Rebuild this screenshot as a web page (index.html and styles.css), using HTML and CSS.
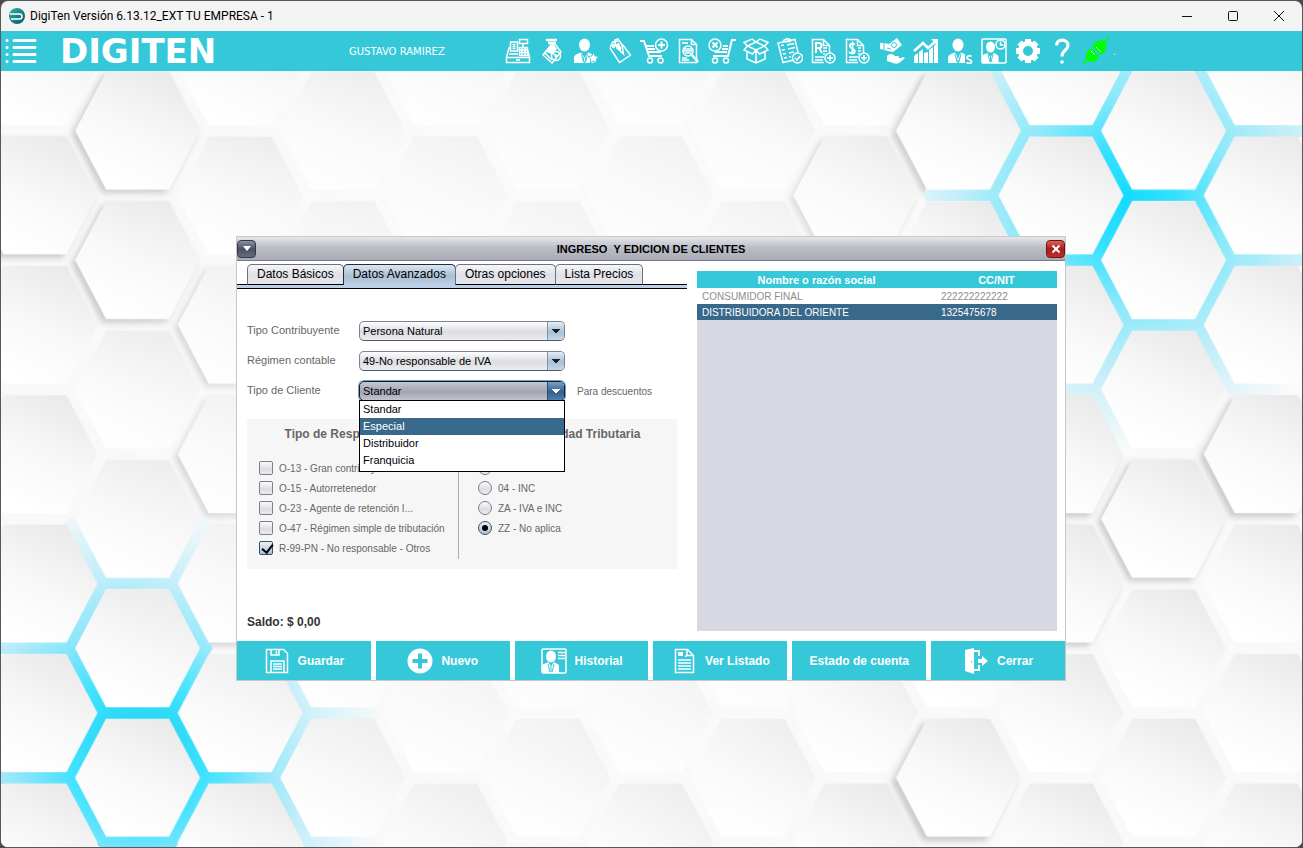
FILE: index.html
```html
<!DOCTYPE html>
<html lang="es">
<head>
    <meta charset="UTF-8">
    <meta name="viewport" content="width=device-width, initial-scale=1.0">
    <title>DigiTen Versión 6.13.12_EXT TU EMPRESA - 1</title>
    <link rel="stylesheet" href="styles.css">
</head>
<body>
    <div class="window">
        <header class="title-bar">
            <svg class="app-icon" viewBox="0 0 16 16" aria-hidden="true">
                <defs>
                    <linearGradient id="appFill" x1="0" y1="0" x2="1" y2="1">
                        <stop offset="0" stop-color="#2fb5ad"/>
                        <stop offset="1" stop-color="#07545f"/>
                    </linearGradient>
                </defs>
                <circle cx="8" cy="8" r="8" fill="url(#appFill)"/>
                <path d="M1 6h9.500a2.500 2.500 0 0 1 0 5H2" fill="none" stroke="#fff" stroke-width="1.500"/>
            </svg>
            <span class="window-title">DigiTen Versión 6.13.12_EXT TU EMPRESA - 1</span>
            <div class="window-controls">
                <button type="button" aria-label="Minimizar"><svg viewBox="0 0 12 12"><path d="M1 6.500h10"/></svg></button>
                <button type="button" aria-label="Maximizar"><svg viewBox="0 0 12 12"><rect x="1.500" y="1.500" width="9" height="9" rx="1"/></svg></button>
                <button type="button" aria-label="Cerrar ventana"><svg viewBox="0 0 12 12"><path d="M1 1l10 10M11 1L1 11"/></svg></button>
            </div>
        </header>

        <nav class="toolbar">
            <button type="button" class="menu-button" aria-label="Menú">
                <svg viewBox="0 0 33 26"><path d="M9 2.500h21M9 9.500h21M9 16.500h21M9 23.500h21M2 2.500h.1M2 9.500h.1M2 16.500h.1M2 23.500h.1"/></svg>
            </button>
            <span class="brand">DIGITEN</span>
            <span class="user-name">GUSTAVO RAMIREZ</span>
            <div class="tools">
                <!-- Caja -->
                <button type="button" aria-label="Caja"><svg viewBox="0 0 26 26"><path d="M1.500 19.500h23v5h-23zM1.500 19l2.500-9h2M24.500 19l-2.500-9"/><path d="M5.500 4h7v9h-7zM7.500 6.500h3M7.500 8.500h3M7.500 10.500h3M14.500 1.500h8v4h-8zM18 6v3M14.500 9.500h8v8h-8zM15 12h7M15 14.500h7M17 10v7M20 10v7M4 16h9"/><path class="solid" d="M11 21h4v2h-4z"/></svg></button>
                <!-- Datáfono -->
                <button type="button" aria-label="Pagos"><svg viewBox="0 0 26 26"><path d="M7 2h11M9 5h8" stroke-width="2.500"/><path d="M12 7l4-1 6 8-9 11-9-8z"/><path class="solid" d="M12 8l3-1 3 4-5 5-6-2z"/><path d="M6 15l7 7M10 12l6 5"/><circle cx="17" cy="18" r="4.500"/><path d="M17 16v4M15.500 18h3"/></svg></button>
                <!-- Clientes -->
                <button type="button" aria-label="Clientes"><svg viewBox="0 0 26 26"><ellipse class="solid" cx="11.500" cy="7" rx="5.500" ry="6.500"/><path class="solid" d="M1 25v-5c0-3 3-4 7-5.500l3.500 5 3.500-5c3 1 5 2 6.500 3L20 21l1 4z"/><path class="cut" d="M11.500 18l-1.500 3 1.500 4 1.500-4zM8.500 16l2 8M14.500 16l-2 8"/><path class="badge" d="M20.500 14.500l1.700 3.500 3.700.5-2.700 2.700.7 3.800-3.400-1.800-3.400 1.800.7-3.800-2.700-2.700 3.700-.5z"/></svg></button>
                <!-- Etiqueta -->
                <button type="button" aria-label="Etiquetas"><svg viewBox="0 0 26 26"><path d="M3 9.500L6 4l5-1M15 6l8.500 11-11 7.500L3 10"/><circle cx="6.500" cy="8" r="1.200"/><path d="M8 6V2l3-1 4 6 1.500 9-6.500-6L8 5M11 5l3 6M9.500 6l4 6"/></svg></button>
                <!-- Carro de ventas -->
                <button type="button" aria-label="Ventas"><svg viewBox="0 0 30 26"><path d="M1 3h4l5 15h13M7 8h8M8 11h8M9 14h13"  stroke-width="2"/><circle cx="11" cy="22.500" r="2.500"/><circle cx="21.500" cy="22.500" r="2.500"/><circle cx="22.500" cy="7" r="6"/><path d="M22.500 3.500v7M19 7h7" stroke-width="2"/></svg></button>
                <!-- Buscar factura -->
                <button type="button" aria-label="Buscar factura"><svg viewBox="0 0 26 26"><path d="M4.500 1.500h12l5 5v18h-17zM16.500 1.500v5h5M7 5h6M7 20h5M7 22h7"/><circle cx="13" cy="13" r="5"/><path d="M9 11h8M9 13h8M10 15h6"/><path d="M17 17l6 7" stroke-width="2.500"/></svg></button>
                <!-- Anular venta -->
                <button type="button" aria-label="Anular venta"><svg viewBox="0 0 30 26"><path d="M29 2h-4l-4 16H6M21 8h-5M21 11h-6M20 14H8" stroke-width="2"/><circle cx="8" cy="22.500" r="2.500"/><circle cx="19" cy="22.500" r="2.500"/><circle cx="8" cy="7" r="6"/><path d="M5.500 4.500l5 5M10.500 4.500l-5 5" stroke-width="2"/></svg></button>
                <!-- Inventario -->
                <button type="button" aria-label="Inventario"><svg viewBox="0 0 26 26"><path d="M4.500 8L13 4l8.500 4L13 12zM4.500 8L1 12l8.500 4L13 12l3.500 4L25 12l-3.500-4M4.500 8L1 4.500 9 1l4 3 4-3 8 3.500L21.500 8M4 14v7l9 4 9-4v-7M13 13v12"/></svg></button>
                <!-- Pedidos -->
                <button type="button" aria-label="Pedidos"><svg viewBox="0 0 26 26"><path d="M17 22l-11 2.500L1 5l17-3.500 3 13M6 4l1-2 2-1 2-.2 2 .8v2zM4 7.500L7 7M10 7l7-1.500M5 12l3-.500M11 11l7-1.500M6 16l3-.500M12 15l5-1M7 20l3-.500M12 19l2-.500" /><circle cx="20.500" cy="20" r="5"/><path d="M18 20l2 2 3-4"/></svg></button>
                <!-- Recibos -->
                <button type="button" aria-label="Recibos"><svg viewBox="0 0 26 26"><path d="M13 24.500H1.500v-23h11l6 6v7M12.500 1.500v6h6M4 19h9M4 22h8M12 10h4M12 13h4M12 16h2"/><path d="M5 15V5h3a2.500 2.500 0 0 1 0 5H5M8 10l3 5" stroke-width="2"/><circle cx="19" cy="20" r="5"/><path d="M19 17v6M16 20h6"/></svg></button>
                <!-- Comprobantes de egreso -->
                <button type="button" aria-label="Egresos"><svg viewBox="0 0 26 26"><path d="M13 24.500H1.500v-23h11l6 6v7M12.500 1.500v6h6M4 19h9M4 22h8M13 10h3M13 13h3M13 16h2"/><path d="M10 6.500C7 4.500 4 6 5 8.500S10.500 11 10 13.500 6 16 4 14M7.500 3.500v13" stroke-width="1.800"/><circle cx="19" cy="20" r="5"/><path d="M19 17v6M16 20h6"/></svg></button>
                <!-- Préstamos -->
                <button type="button" aria-label="Préstamos"><svg viewBox="0 0 26 26"><path class="solid" d="M1 5h4l5 1 8-6 5 7-9 7-5-1-8-2z"/><circle class="cut" cx="15" cy="7" r="2.500"/><path class="cut" d="M5 4v8M8 10l4 1"/><path class="solid" d="M8 18c3-3 6-2 8 0h3c2 0 1 2-1 2h4l2-1c2 0 2 1 1 2l-5 4c-4 2-8-1-12-2z"/></svg></button>
                <!-- Informes -->
                <button type="button" aria-label="Informes"><svg viewBox="0 0 26 26"><path class="solid" d="M1 18l4-3v10H1zM6 14l4-3v14H6zM11 15l4-1v11h-4zM16 12l4-3v16h-4zM21 8l4-4v21h-4z"/><path d="M1 13l9-8 5 5 8-7" stroke-width="2.500"/><path class="solid" d="M18 1h7v7z"/></svg></button>
                <!-- Vendedores -->
                <button type="button" aria-label="Vendedores"><svg viewBox="0 0 26 26"><ellipse class="solid" cx="11" cy="7" rx="5.500" ry="6.500"/><path class="solid" d="M1 25v-5c0-3 3-4 7-5.500l3 5 3-5c2 1 3 1 4 2v8.500z"/><path class="cut" d="M11 18l-1.500 3 1.500 4 1.500-4zM8 16l2 8M14 16l-2 8"/><path d="M24.500 18.500c-3-2-6 1-3.500 2.500s4 1 3.500 3-3 1.500-5 .5" stroke-width="1.800"/></svg></button>
                <!-- Turnos -->
                <button type="button" aria-label="Turnos"><svg viewBox="0 0 26 26"><rect x="1" y="1" width="24" height="24" rx="1"/><ellipse class="solid" cx="9.500" cy="9" rx="4.500" ry="5.500"/><path class="solid" d="M1 25v-6c0-2 3-3 5.500-4l3 4 3-4c3 1 5 2 5 4v6z"/><path class="cut" d="M9.500 17v7M7 16l2 8M12 16l-2 8"/><circle cx="19.500" cy="6.500" r="4.500"/><path d="M19.500 3.500v3.500h3"/></svg></button>
                <!-- Configuración -->
                <button type="button" aria-label="Configuración"><svg viewBox="0 0 26 26"><path d="M13 1v5M13 20v5M1 13h5M20 13h5M4.500 4.500L8 8M18 18l3.500 3.500M21.500 4.500L18 8M8 18l-3.500 3.500" stroke-width="6" stroke-linecap="butt"/><circle cx="13" cy="13" r="7.500" stroke-width="5"/></svg></button>
                <!-- Ayuda -->
                <button type="button" aria-label="Ayuda"><svg viewBox="0 0 26 26"><path d="M7.500 7.500C7.500 0 19 .500 19 7.500c0 5-6 4-6 11" stroke-width="3.200"/><circle class="solid" cx="13" cy="24" r="1.800"/></svg></button>
                <!-- Conexión -->
                <button type="button" class="online" aria-label="Conectado"><svg viewBox="0 0 26 26"><path d="M0 26l5-5M21 5l5-5" stroke-width="2"/><path class="solid" d="M5 12l3-2 8 8-2 4c-7 6-15-2-9-10zM9 8l4-4c7-5 13 2 9 9l-4 4z"/><path d="M8 13l4 4M13 9l5 5" class="pins"/></svg></button>
            </div>
            <span class="status-dot">.</span>
        </nav>

        <main class="desktop">
            <svg class="wallpaper" viewBox="0 71 1303 776" preserveAspectRatio="xMidYMid slice" aria-hidden="true">
                <defs>
                    <linearGradient id="cell" x1=".75" y1="0" x2=".3" y2=".9">
                        <stop offset="0" stop-color="#e9e9e9"/>
                        <stop offset=".55" stop-color="#f8f8f8"/>
                        <stop offset="1" stop-color="#ffffff"/>
                    </linearGradient>
                    <polygon id="hex" points="-62.500,0 -31.500,-59 31.500,-59 62.500,0 31.500,59 -31.500,59"/>
                    <pattern id="comb" x="35" y="66" width="205.200" height="129.400" patternUnits="userSpaceOnUse">
                        <g fill="url(#cell)">
                            <use href="#hex" x="0" y="0"/>
                            <use href="#hex" x="205.200" y="0"/>
                            <use href="#hex" x="0" y="129.400"/>
                            <use href="#hex" x="205.200" y="129.400"/>
                            <use href="#hex" x="102.600" y="64.700"/>
                        </g>
                    </pattern>
                    <radialGradient id="glowRight" gradientUnits="userSpaceOnUse" cx="1125" cy="200" r="250">
                        <stop offset="0" stop-color="#12dbff"/>
                        <stop offset=".2" stop-color="#35e0ff"/>
                        <stop offset=".42" stop-color="#8be9fa"/>
                        <stop offset=".7" stop-color="#c4eef9"/>
                        <stop offset="1" stop-color="#fafafa"/>
                    </radialGradient>
                    <radialGradient id="glowLeft" gradientUnits="userSpaceOnUse" cx="140" cy="745" r="245">
                        <stop offset="0" stop-color="#18d2ef"/>
                        <stop offset=".3" stop-color="#42e2ff"/>
                        <stop offset=".5" stop-color="#8be6fa"/>
                        <stop offset=".7" stop-color="#c0edf9"/>
                        <stop offset="1" stop-color="#f4f8fa"/>
                    </radialGradient>
                    <radialGradient id="haze" gradientUnits="userSpaceOnUse" cx="560" cy="420" r="480">
                        <stop offset="0" stop-color="#fbfbfb" stop-opacity=".7"/>
                        <stop offset=".6" stop-color="#fbfbfb" stop-opacity=".5"/>
                        <stop offset="1" stop-color="#fbfbfb" stop-opacity="0"/>
                    </radialGradient>
                    <filter id="soft" x="-10%" y="-10%" width="120%" height="120%">
                        <feGaussianBlur stdDeviation="3"/>
                    </filter>
                </defs>
                <rect y="71" width="1303" height="777" fill="#f9f9f9"/>
                <!-- raised cells -->
                <g fill="#c9c9c9" filter="url(#soft)">
                    <use href="#hex" x="134" y="134"/>
                    <use href="#hex" x="134" y="264"/>
                    <use href="#hex" x="31" y="199"/>
                    <use href="#hex" x="237" y="328"/>
                    <use href="#hex" x="237" y="458"/>
                    <use href="#hex" x="237" y="587"/>
                    <use href="#hex" x="852" y="199"/>
                    <use href="#hex" x="954" y="134"/>
                    <use href="#hex" x="1160" y="522"/>
                    <use href="#hex" x="1262" y="458"/>
                    <use href="#hex" x="1057" y="458"/>
                    <use href="#hex" x="1057" y="587"/>
                    <use href="#hex" x="954" y="782"/>
                </g>
                <path class="glow" stroke="url(#glowRight)" d="M1129 195L1095 131L1129 66M1095 131H1027L993 195L1027 260H1095L1129 195H1198L1232 131L1198 66M1232 131H1303M1198 195L1232 260H1303M1232 260L1198 325H1129L1095 260M1198 325L1232 389H1303M1129 325L1095 389L1129 454M1095 389H1027M1027 131L993 66M993 195H925"/>
                <path class="glow" stroke="url(#glowLeft)" d="M103 713H172L206 778L172 842H103L69 778L103 713L69 648L103 583H172L206 648L172 713M69 648H0M69 778H0M206 778H274L308 713H377M274 778L308 842H377M274 648L308 713M103 583L69 519M172 583L206 519"/>
                <rect y="71" width="1303" height="777" fill="url(#comb)"/>
                <rect y="71" width="1303" height="777" fill="url(#haze)"/>
            </svg>

            <section class="dialog" role="dialog" aria-labelledby="dialogTitle">
                <div class="dialog-bar">
                    <button type="button" class="dialog-menu" aria-label="Opciones de ventana"><svg viewBox="0 0 8 5"><path d="M0 0h8L4 5z"/></svg></button>
                    <h1 id="dialogTitle">INGRESO &nbsp;Y EDICION DE CLIENTES</h1>
                    <button type="button" class="dialog-close" aria-label="Cerrar"><svg viewBox="0 0 10 10"><path d="M1.500 1.500l7 7M8.500 1.500l-7 7"/></svg></button>
                </div>

                <div class="dialog-body">
                    <div class="editor">
                        <div class="tabs" role="tablist">
                            <button type="button" role="tab">Datos Básicos</button>
                            <button type="button" role="tab" class="active" aria-selected="true">Datos Avanzados</button>
                            <button type="button" role="tab">Otras opciones</button>
                            <button type="button" role="tab">Lista Precios</button>
                        </div>

                        <form class="fields">
                            <div class="field">
                                <label for="contribuyente">Tipo Contribuyente</label>
                                <div class="combo">
                                    <select id="contribuyente"><option>Persona Natural</option></select>
                                </div>
                            </div>
                            <div class="field">
                                <label for="regimen">Régimen contable</label>
                                <div class="combo">
                                    <select id="regimen"><option>49-No responsable de IVA</option></select>
                                </div>
                            </div>
                            <div class="field">
                                <label for="tipoCliente">Tipo de Cliente</label>
                                <div class="combo open">
                                    <select id="tipoCliente">
                                        <option>Standar</option>
                                        <option>Especial</option>
                                        <option>Distribuidor</option>
                                        <option>Franquicia</option>
                                    </select>
                                    <ul class="combo-list" role="listbox" aria-label="Tipo de Cliente">
                                        <li role="option">Standar</li>
                                        <li role="option" class="highlighted" aria-selected="true">Especial</li>
                                        <li role="option">Distribuidor</li>
                                        <li role="option">Franquicia</li>
                                    </ul>
                                </div>
                                <span class="hint">Para descuentos</span>
                            </div>

                            <div class="tax-panel">
                                <fieldset>
                                    <legend>Tipo de Responsabilidad</legend>
                                    <label><input type="checkbox">O-13 - Gran contribuyente</label>
                                    <label><input type="checkbox">O-15 - Autorretenedor</label>
                                    <label><input type="checkbox">O-23 - Agente de retención I...</label>
                                    <label><input type="checkbox">O-47 - Régimen simple de tributación</label>
                                    <label><input type="checkbox" checked>R-99-PN - No responsable - Otros</label>
                                </fieldset>
                                <fieldset>
                                    <legend>Responsabilidad Tributaria</legend>
                                    <label><input type="radio" name="tributo">01 - IVA</label>
                                    <label><input type="radio" name="tributo">04 - INC</label>
                                    <label><input type="radio" name="tributo">ZA - IVA e INC</label>
                                    <label><input type="radio" name="tributo" checked>ZZ - No aplica</label>
                                </fieldset>
                            </div>
                            <p class="balance">Saldo: $ 0,00</p>
                        </form>
                    </div>

                    <div class="client-list">
                        <table>
                            <thead>
                                <tr><th class="name">Nombre o razón social</th><th>CC/NIT</th></tr>
                            </thead>
                            <tbody>
                                <tr><td>CONSUMIDOR FINAL</td><td>222222222222</td></tr>
                                <tr class="selected"><td>DISTRIBUIDORA DEL ORIENTE</td><td>1325475678</td></tr>
                            </tbody>
                        </table>
                    </div>
                </div>

                <div class="actions">
                    <button type="button"><svg viewBox="0 0 26 26"><path d="M2.500 1.500h17l4 4v19h-21zM7 2v5h8V2M12.500 3v3M7 24V13h13v11M9 16h9M9 18.500h9M9 21h9"/></svg>Guardar</button>
                    <button type="button"><svg viewBox="0 0 26 26"><circle class="solid" cx="13" cy="13" r="12.500"/><path class="plus" d="M13 5.500v15M5.500 13h15"/></svg>Nuevo</button>
                    <button type="button"><svg viewBox="0 0 26 26"><rect x="1" y="1" width="24" height="24" rx="1"/><ellipse class="solid" cx="10" cy="8.500" rx="5" ry="6"/><path class="solid" d="M1 25v-7c0-2 3-2 6-4l3 4 3-4c3 2 5 2 5 4v7z"/><path class="cut" d="M10 17v7M7 16l2 8M13 16l-2 8"/><path d="M17 4.500h7M17 7.500h7M17 10.500h7"/></svg>Historial</button>
                    <button type="button"><svg viewBox="0 0 26 26"><path d="M4.500 1.500h12l6 6v17h-18zM16 1.500v6h6M7 12h13M7 15h13M7 18h13M7 21h13M14 8h2"/><path class="solid" d="M7 4h5v4H7z"/></svg>Ver Listado</button>
                    <button type="button">Estado de cuenta</button>
                    <button type="button"><svg viewBox="0 0 26 26"><path class="solid" d="M2 2l9-2v26l-9-3z"/><path d="M11 3h5v5M11 22h5v-5" stroke-width="2"/><path class="solid" d="M15 11h4V8l6 5-6 5v-3h-4z"/><path class="cut" d="M8.500 13v1.500"/></svg>Cerrar</button>
                </div>
            </section>
        </main>
    </div>
</body>
</html>
```

FILE: styles.css
```css
* {
    box-sizing: border-box;
}
body {
    margin: 0;
    background-color: #4a4a4c;
    font-family: "Liberation Sans", Arial, sans-serif;
    font-size: 11px;
    color: #000;
}
button {
    padding: 0;
    border: none;
    background: none;
    font-family: inherit;
    color: inherit;
}
svg {
    display: block;
    fill: none;
}
.window {
    display: flex;
    flex-direction: column;
    height: 100vh;
    border: 1px solid #58585a;
    border-radius: 8px;
    overflow: hidden;
}

/* Title bar */
.title-bar {
    display: flex;
    align-items: center;
    height: 30px;
    padding-left: 8px;
    background-color: #f3f3f3;
}
.app-icon {
    width: 16px;
    height: 16px;
    margin-right: 5px;
}
.window-title {
    font-family: Roboto, "Segoe UI", sans-serif;
    font-size: 12px;
}
.window-controls {
    display: flex;
    margin-left: auto;
}
.window-controls button {
    display: flex;
    justify-content: center;
    width: 46px;
}
.window-controls svg {
    width: 12px;
    height: 12px;
    stroke: #111;
}

/* Toolbar */
.toolbar {
    display: flex;
    align-items: center;
    height: 40px;
    background-color: #35c8d9;
    color: #fff;
}
.toolbar svg {
    height: 26px;
    stroke: #fff;
    stroke-width: 1.5;
}
.menu-button {
    width: 33px;
    margin: 0 22px 0 4px;
}
.toolbar .menu-button svg {
    width: 33px;
    stroke-width: 3;
    stroke-linecap: round;
}
.brand {
    width: 289px;
    font-family: "DejaVu Sans", sans-serif;
    font-size: 34px;
    font-weight: bold;
    line-height: 40px;
}
.user-name {
    width: 152px;
    font-family: "DejaVu Sans", Tahoma, sans-serif;
    font-size: 10px;
}
.tools {
    display: flex;
}
.tools button {
    display: flex;
    justify-content: center;
    width: 34px;
}
.solid {
    fill: #fff;
    stroke: none;
}
.cut {
    stroke: #35c8d9;
    stroke-width: 1;
}
.badge {
    fill: #fff;
    stroke: #35c8d9;
    stroke-width: 1;
}
.toolbar .online svg {
    stroke: #00ff00;
}
.online .solid {
    fill: #00ff00;
}
.online .pins {
    stroke: #fff;
    stroke-width: 1;
    stroke-dasharray: 2 1;
}
.status-dot {
    font-size: 10px;
}

/* Desktop */
.desktop {
    position: relative;
    flex: 1;
    display: flex;
    align-items: center;
    justify-content: center;
    padding: 0 1px 1px 0;
    background-color: #f9f9f9;
}
.wallpaper {
    position: absolute;
    top: 0;
    left: 0;
    width: 100%;
    height: 100%;
}
.glow {
    stroke-width: 12;
    stroke-linejoin: round;
}

/* Client dialog */
.dialog {
    position: relative;
    width: 830px;
    border: 1px solid #c8c8c8;
    background-color: #fff;
}
.dialog-bar {
    display: flex;
    align-items: center;
    height: 24px;
    border-bottom: 1px solid #777a88;
    background: linear-gradient(#e6e7ea, #bcbec6 45%, #a9acb6);
}
.dialog-bar h1 {
    flex: 1;
    margin: 0;
    font-size: 11px;
    text-align: center;
}
.dialog-menu,
.dialog-close {
    display: flex;
    align-items: center;
    justify-content: center;
    width: 19px;
    height: 18px;
    border: 1px solid #33374a;
    border-radius: 4px;
    background: linear-gradient(#8a8fa3, #4b5066 50%, #666b80);
}
.dialog-close {
    border-color: #6c1512;
    background: linear-gradient(#d8635b, #a81d17 50%, #b9332b);
}
.dialog-menu svg {
    width: 8px;
    height: 5px;
    fill: #fff;
}
.dialog-close svg {
    width: 10px;
    height: 10px;
    stroke: #fff;
    stroke-width: 2;
}
.dialog-body {
    display: grid;
    grid-template-columns: 450px 1fr;
    gap: 10px;
    padding-right: 8px;
}
.tabs {
    display: flex;
    height: 28px;
    padding: 3px 0 0 10px;
    border-bottom: 1px solid #000;
    background: linear-gradient(#000, #000) 0 23px / 100% 1px no-repeat,
                linear-gradient(#bdd0e6, #bdd0e6) 0 24px / 100% 4px no-repeat;
}
.tabs button {
    display: flex;
    height: 21px;
    padding: 0 9px;
    border: 1px solid #6d707d;
    border-bottom-color: #000;
    border-radius: 5px 5px 0 0;
    margin-right: -1px;
    background: linear-gradient(#f7f7fa, #e0e1e7 50%, #e6e7ec);
    font-size: 12px;
    line-height: 18px;
}
.tabs .active {
    border-color: #1c2c42;
    border-bottom: none;
    background: linear-gradient(#dce7f0, #a9bfd3 55%, #bdd0e6);
}
.fields {
    padding: 32px 10px 0;
}
.field {
    display: flex;
    align-items: center;
    height: 20px;
    margin-bottom: 10px;
    color: #666;
}
.field label {
    width: 112px;
    padding-bottom: 2px;
}
.combo {
    position: relative;
    width: 206px;
    color: #000;
}
.combo select {
    display: block;
    width: 100%;
    height: 20px;
    padding: 0 3px;
    border: 1px solid #7d8191;
    border-bottom-color: #4b5a70;
    border-radius: 5px;
    appearance: none;
    background: linear-gradient(#fdfdfe, #dcdde3 55%, #ececf0);
    font-family: inherit;
    font-size: 11px;
    color: #000;
}
/* arrow box at the right end of the combo */
.combo::after {
    content: "";
    position: absolute;
    top: 1px;
    right: 1px;
    width: 16px;
    height: 18px;
    border-left: 1px solid #7e93ac;
    border-radius: 0 4px 4px 0;
    background: conic-gradient(from -39deg at 50% 100%, #1a1f28 78deg, transparent 0) 50% 50% / 8px 5px no-repeat,
                linear-gradient(#e4edf5, #a9bfd3 55%, #c8d9e8);
    pointer-events: none;
}
.combo.open select {
    border-color: #151c28;
    background: linear-gradient(#c5c8d0, #a2a5b1 55%, #c2c5d0);
    box-shadow: 0 0 0 1px #6da1cd;
}
.combo.open::after {
    border-color: #274c70;
    background: conic-gradient(from -39deg at 50% 100%, #fff 78deg, transparent 0) 50% 50% / 8px 5px no-repeat,
                linear-gradient(#7f9fc0, #33608c 55%, #5382ae);
}
.combo-list {
    position: absolute;
    z-index: 2;
    top: 19px;
    left: 0;
    width: 100%;
    margin: 0;
    padding: 0 0 2px;
    border: 1px solid #000;
    background-color: #fff;
    list-style: none;
}
.combo-list li {
    height: 17px;
    padding: 0 3px;
    line-height: 17px;
}
.combo-list .highlighted {
    background-color: #39698a;
    color: #fff;
}
.hint {
    margin-left: 12px;
    font-size: 10px;
}
.tax-panel {
    display: grid;
    grid-template-columns: 211px 1fr;
    height: 150px;
    margin-top: 18px;
    padding-bottom: 10px;
    background-color: #f6f6f6;
    color: #666;
}
.tax-panel fieldset {
    min-width: 0;
    margin: 0;
    padding: 0 0 0 12px;
    border: none;
    font-size: 10px;
    white-space: nowrap;
}
.tax-panel fieldset + fieldset {
    padding-left: 20px;
    background: linear-gradient(#a9acb8, #a9acb8) 0 39px / 1px 100% no-repeat;
}
.tax-panel legend {
    float: left;
    width: 100%;
    height: 39px;
    padding: 0 6px 0 0;
    font-size: 12px;
    font-weight: bold;
    line-height: 30px;
    text-align: center;
}
.tax-panel fieldset + fieldset legend {
    padding-right: 28px;
}
.tax-panel label {
    display: flex;
    clear: both;
    align-items: center;
    gap: 6px;
    height: 20px;
}
.tax-panel input {
    flex: none;
    width: 14px;
    height: 14px;
    margin: 0;
    border: 1px solid #7b7e8b;
    border-radius: 2px;
    appearance: none;
    background: linear-gradient(#fbfbfc, #dcdde3 60%, #eee);
}
.tax-panel input[type="radio"] {
    border-radius: 50%;
}
.tax-panel input:checked {
    border-color: #3d5068;
    background: linear-gradient(#eaf1f7, #a9c0d5);
}
.tax-panel input[type="checkbox"]:checked::after {
    content: "";
    display: block;
    width: 5px;
    height: 9px;
    margin: 0 0 0 4px;
    border: solid #000;
    border-width: 0 2px 2px 0;
    transform: rotate(38deg);
}
.tax-panel input[type="radio"]:checked::after {
    content: "";
    display: block;
    width: 6px;
    height: 6px;
    margin: 3px;
    border-radius: 50%;
    background-color: #000;
}
.balance {
    margin: 46px 0 0;
    font-size: 12px;
    font-weight: bold;
    line-height: 15px;
    color: #333;
}
.client-list {
    height: 360px;
    margin: 10px 0;
    background-color: #d6d9e2;
}
.client-list table {
    width: 100%;
    border-collapse: collapse;
    table-layout: fixed;
    font-size: 10px;
}
.client-list th {
    height: 17px;
    padding: 0;
    background-color: #35c8d9;
    font-size: 11px;
    color: #fff;
}
.client-list .name {
    width: 239px;
}
.client-list td {
    height: 16px;
    padding: 0 5px;
    background-color: #fff;
    color: #8d8d8d;
}
.client-list .selected td {
    background-color: #39698a;
    color: #fff;
}
.actions {
    display: flex;
    gap: 5px;
}
.actions button {
    display: flex;
    flex: 1;
    align-items: center;
    justify-content: center;
    gap: 8px;
    height: 39px;
    background-color: #35c8d9;
    font-size: 12px;
    font-weight: bold;
    color: #fff;
}
.actions svg {
    width: 26px;
    height: 26px;
    stroke: #fff;
    stroke-width: 1.5;
}
.actions .solid {
    stroke: none;
}
.actions .plus {
    stroke: #35c8d9;
    stroke-width: 4;
}
```
